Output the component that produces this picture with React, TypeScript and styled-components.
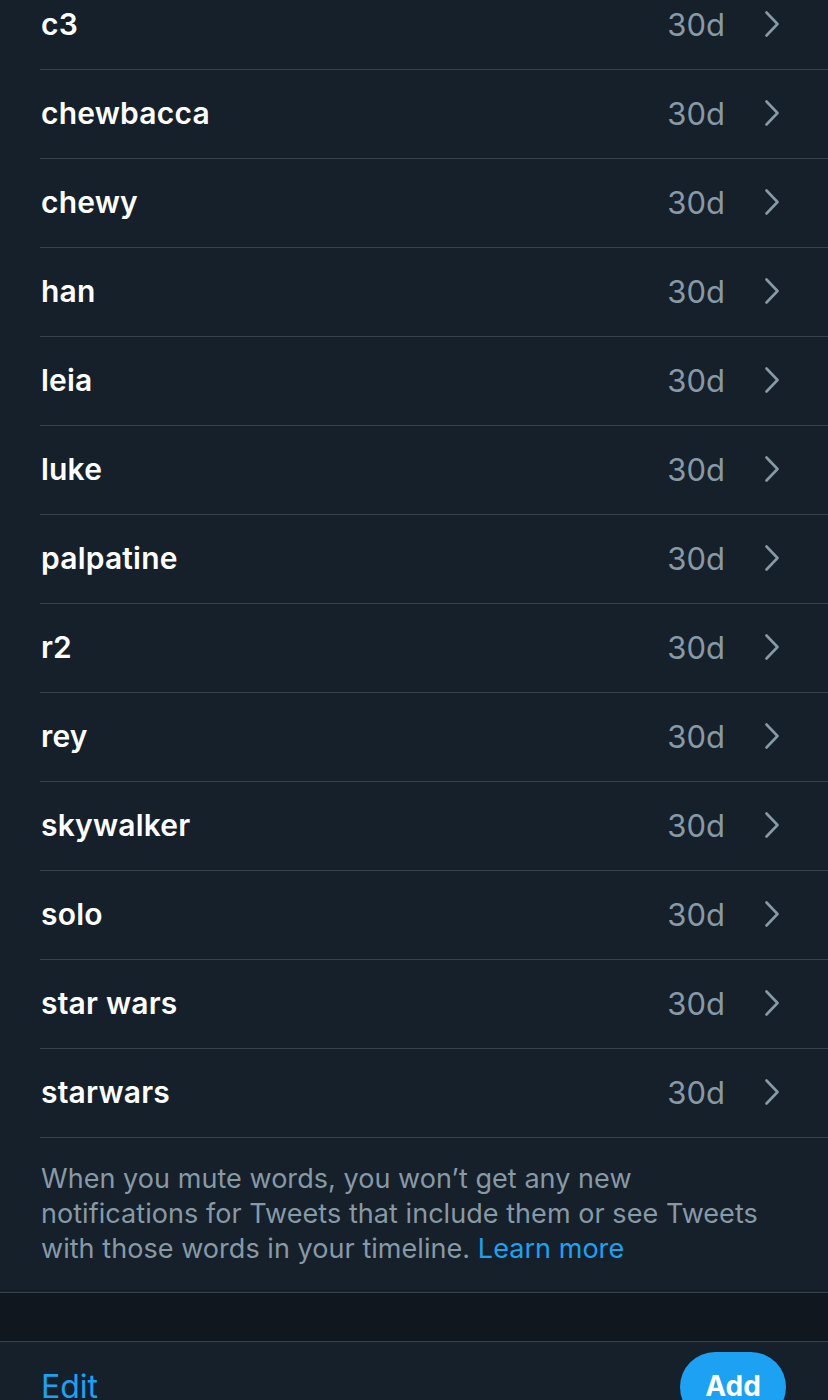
import React from "react";
import styled, { createGlobalStyle } from "styled-components";

const GlobalStyle = createGlobalStyle`
  html, body {
    margin: 0;
    padding: 0;
    background: #15202b;
  }
  body {
    font-family: Inter, "Noto Sans", "Liberation Sans", sans-serif;
    -webkit-font-smoothing: antialiased;
  }
`;

const Page = styled.div`
  width: 828px;
  height: 1400px;
  overflow: hidden;
  background: #15202b;
`;

const List = styled.ul`
  list-style: none;
  margin: -19px 0 0 0;
  padding: 0 0 0 40px;
`;

const Row = styled.li`
  height: 89px;
  display: flex;
  align-items: center;
  border-bottom: 1px solid #38444d;
  padding-right: 48px;
  padding-bottom: 2px;
  box-sizing: border-box;
`;

const Word = styled.span`
  flex: 1;
  padding-left: 1px;
  color: #ffffff;
  font-size: 30px;
  font-weight: 600;
  letter-spacing: 0.2px;
`;

const Duration = styled.span`
  color: #8899a6;
  font-size: 31px;
  font-weight: 400;
  margin-right: 39px;
`;

const Chevron = styled.svg`
  width: 16px;
  height: 26px;
  display: block;
`;

const Note = styled.p`
  margin: 0;
  padding: 23px 53px 26px 41px;
  color: #8899a6;
  font-size: 27px;
  line-height: 35px;
  font-weight: 400;
  letter-spacing: 0.05px;
  border-bottom: 1px solid #38444d;
`;

const Link = styled.a`
  color: #1da1f2;
  text-decoration: none;
`;

const Spacer = styled.div`
  height: 48px;
  background: #10171e;
  border-bottom: 1px solid #38444d;
`;

const BottomBar = styled.div`
  display: flex;
  align-items: flex-start;
  justify-content: space-between;
  padding: 10px 42px 0 41px;
`;

const EditButton = styled.button`
  background: none;
  border: none;
  padding: 0;
  margin-top: 15px;
  color: #1da1f2;
  font-family: inherit;
  font-size: 32px;
  font-weight: 400;
`;

const AddButton = styled.button`
  background: #1da1f2;
  border: none;
  border-radius: 40px;
  width: 106px;
  height: 70px;
  color: #ffffff;
  font-family: inherit;
  font-size: 28px;
  font-weight: 700;
  padding: 17px 0 0 0;
  display: flex;
  justify-content: center;
  align-items: flex-start;
`;

const words = [
  "c3",
  "chewbacca",
  "chewy",
  "han",
  "leia",
  "luke",
  "palpatine",
  "r2",
  "rey",
  "skywalker",
  "solo",
  "star wars",
  "starwars",
];

export default function App() {
  return (
    <Page>
      <GlobalStyle />
      <List>
        {words.map((w) => (
          <Row key={w}>
            <Word>{w}</Word>
            <Duration>30d</Duration>
            <Chevron viewBox="0 0 16 26" aria-hidden="true">
              <path
                d="M2.5 1.5 L13.5 13 L2.5 24.5"
                fill="none"
                stroke="#8899a6"
                strokeWidth="2.6"
                strokeLinecap="round"
                strokeLinejoin="round"
              />
            </Chevron>
          </Row>
        ))}
      </List>
      <Note>
        When you mute words, you won’t get any new notifications for Tweets
        that include them or see Tweets with those words in your timeline.{" "}
        <Link href="#">Learn more</Link>
      </Note>
      <Spacer />
      <BottomBar>
        <EditButton>Edit</EditButton>
        <AddButton>Add</AddButton>
      </BottomBar>
    </Page>
  );
}
